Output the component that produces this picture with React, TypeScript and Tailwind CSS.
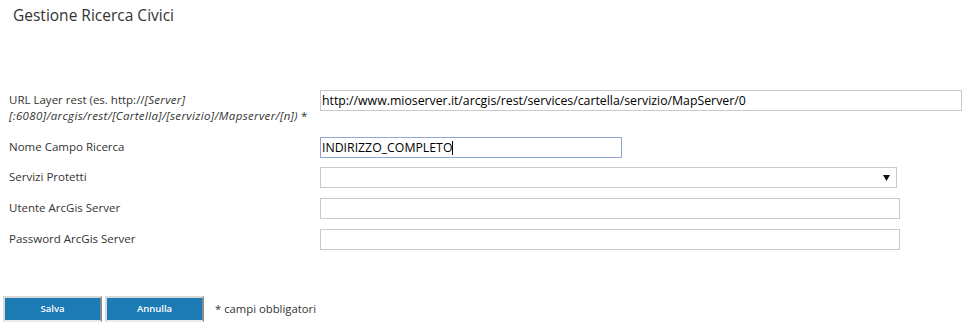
import React from 'react';

const font = { fontFamily: '"Open Sans", "Liberation Sans", sans-serif' };

function Row({ label, h, children }: { label: React.ReactNode; h: string; children: React.ReactNode }) {
  return (
    <div className={`flex items-start ${h}`}>
      <div className="w-[320px] shrink-0 pl-[9px] pr-2 text-[11.5px] leading-[16px] text-[#333] min-h-[20px] flex items-center">
        {label}
      </div>
      {children}
    </div>
  );
}

export default function App() {
  return (
    <div className="w-[975px] h-[329px] bg-white overflow-hidden text-[#222]" style={font}>
      {/* Title */}
      <div className="h-[90px] pl-[13px] pt-[5px] text-[15.5px] leading-[20px] text-[#333]">
        Gestione Ricerca Civici
      </div>

      {/* URL row */}
      <div className="flex items-start h-[47px]">
        <div className="w-[320px] shrink-0 pl-[9px] pt-[2px] text-[11.5px] leading-[16px] text-[#333]">
          URL Layer rest (es. http://<i className="tracking-[0.3px]">[Server]</i>
          <br />
          <i className="tracking-[0.35px]">[:6080]/arcgis/rest/[Cartella]/[servizio]/Mapserver/[n])</i> *
        </div>
        <input
          readOnly
          value="http://www.mioserver.it/arcgis/rest/services/cartella/servizio/MapServer/0"
          className="w-[642px] h-[21px] border border-[#c9c9c9] px-[1px] text-[12.3px] text-black outline-none"
          style={font}
        />
      </div>

      <Row label="Nome Campo Ricerca" h="h-[30px]">
        <div className="w-[302px] h-[21px] border border-[#8fa8d8] px-[1px] text-[12.3px] leading-[19px] text-black flex items-center">
          INDIRIZZO_COMPLETO<span className="inline-block w-px h-[14px] bg-black"></span>
        </div>
      </Row>

      <Row label="Servizi Protetti" h="h-[31px]">
        <div className="w-[577px] h-[21px] border border-[#c9c9c9] flex items-center justify-end pr-[6px]">
          <svg width="7" height="6" viewBox="0 0 7 6">
            <path d="M0 0h7L3.5 6z" fill="#111" />
          </svg>
        </div>
      </Row>

      <Row label="Utente ArcGis Server" h="h-[31px]">
        <div className="w-[580px] h-[21px] border border-[#c9c9c9]"></div>
      </Row>

      <Row label="Password ArcGis Server" h="h-[67px]">
        <div className="w-[580px] h-[21px] border border-[#c9c9c9]"></div>
      </Row>

      {/* Buttons */}
      <div className="flex items-center pl-[3px]">
        <button className="w-[99px] h-[26px] bg-[#1c7ab5] border-2 border-l-[#d9d9d9] border-t-[#d9d9d9] border-r-[#8a8a8a] border-b-[#eaeaea] text-white text-[9.5px] font-semibold">
          Salva
        </button>
        <button className="ml-[3px] w-[99px] h-[26px] bg-[#1c7ab5] border-2 border-l-[#d9d9d9] border-t-[#d9d9d9] border-r-[#8a8a8a] border-b-[#eaeaea] text-white text-[9.5px] font-semibold">
          Annulla
        </button>
        <span className="ml-[11px] text-[11.3px] text-[#333]">* campi obbligatori</span>
      </div>
    </div>
  );
}
